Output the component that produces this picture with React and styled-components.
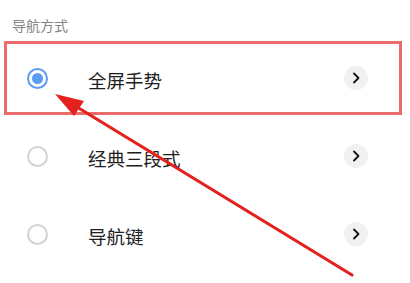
import styled, { createGlobalStyle } from "styled-components"

const GlobalStyle = createGlobalStyle`
  html, body {
    margin: 0;
    padding: 0;
    background: #ffffff;
  }
  body {
    font-family: "Noto Sans CJK SC", "Noto Sans", sans-serif;
  }
`

const options = [
  { label: "全屏手势", selected: true },
  { label: "经典三段式", selected: false },
  { label: "导航键", selected: false },
]

export default function App() {
  return (
    <>
      <GlobalStyle />
      <Page>
        <Header>导航方式</Header>
        <List>
          {options.map((o) => (
            <Row key={o.label} highlighted={o.selected ? "yes" : "no"}>
              <Radio checked={o.selected ? "yes" : "no"} />
              <Label>{o.label}</Label>
              <Chevron>
                <svg width="12" height="12" viewBox="0 0 12 12">
                  <polyline points="4,1.5 8.5,6 4,10.5" fill="none" stroke="#111" strokeWidth="1.8" strokeLinecap="round" strokeLinejoin="round" />
                </svg>
              </Chevron>
            </Row>
          ))}
        </List>
        <Arrow width="410" height="283" viewBox="0 0 410 283">
          <line x1="352" y1="275" x2="72" y2="104" stroke="#e3211d" strokeWidth="3.2" strokeLinecap="round" />
          <polygon points="55,94 84,101 74,116" fill="#e3211d" />
        </Arrow>
      </Page>
    </>
  )
}

const Page = styled.div`
  position: relative;
  width: 410px;
  height: 283px;
  overflow: hidden;
  background: white;
`

const Header = styled.div`
  height: 41px;
  box-sizing: border-box;
  padding: 16px 0 0 12px;
  font-size: 14px;
  line-height: 18px;
  color: #858585;
`

const List = styled.div`
  display: flex;
  flex-direction: column;
  gap: 4px;
`

const Row = styled.div`
  height: 74px;
  box-sizing: border-box;
  margin: 0 8px 0 4px;
  padding: 0 31px 0 20px;
  display: flex;
  align-items: center;
  border: 3px solid ${(p) => (p.highlighted === "yes" ? "#ea6b6b" : "transparent")};
`

const Radio = styled.div`
  width: 21px;
  height: 21px;
  box-sizing: border-box;
  border-radius: 50%;
  border: 2px solid ${(p) => (p.checked === "yes" ? "#5b9bf1" : "#d2d2d2")};
  display: flex;
  align-items: center;
  justify-content: center;
  flex-shrink: 0;

  &::after {
    content: "";
    width: 11px;
    height: 11px;
    border-radius: 50%;
    background: ${(p) => (p.checked === "yes" ? "#5b9bf1" : "transparent")};
  }
`

const Label = styled.div`
  flex: 1;
  margin: 4px 0 0 40px;
  font-size: 18.5px;
  color: #1e1e1e;
`

const Chevron = styled.div`
  width: 24px;
  height: 24px;
  border-radius: 50%;
  background: #f1f1f1;
  display: flex;
  align-items: center;
  justify-content: center;
`

const Arrow = styled.svg`
  position: absolute;
  left: 0;
  top: 0;
  pointer-events: none;
`
